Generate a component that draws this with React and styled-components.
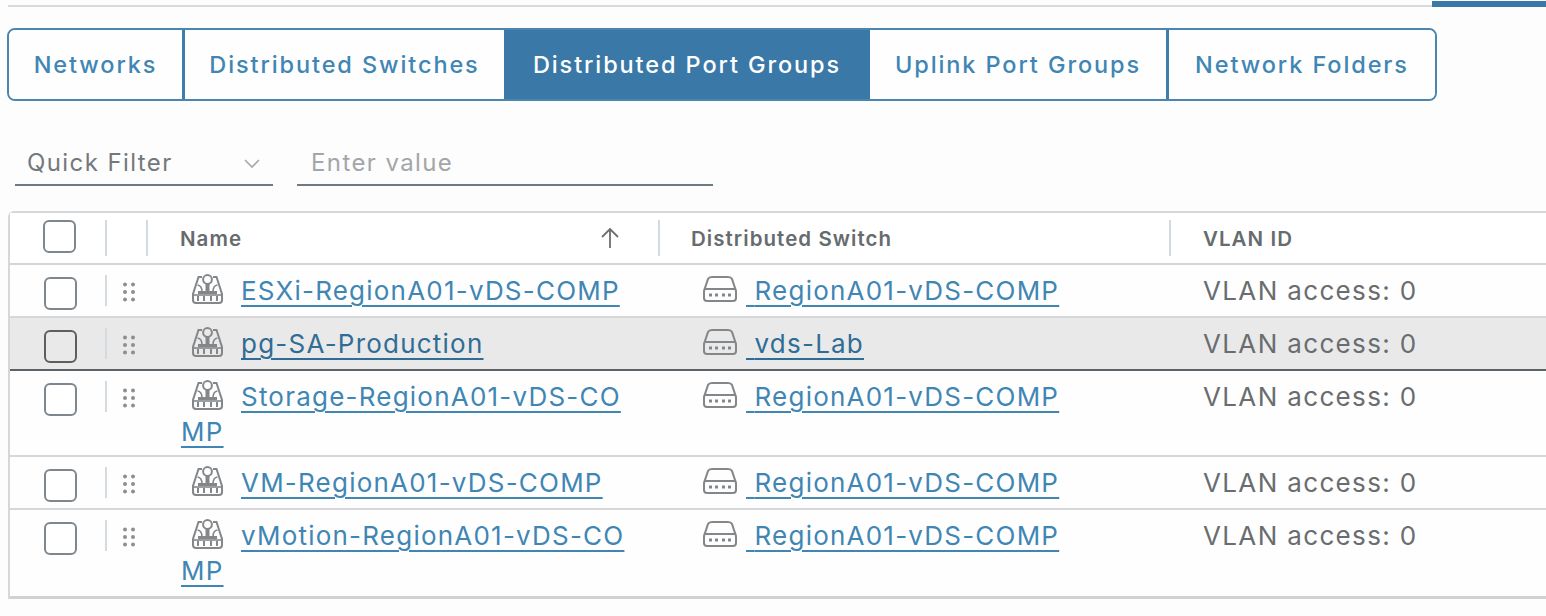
import React from "react";
import styled, { createGlobalStyle } from "styled-components";

const Global = createGlobalStyle`
  html, body { margin: 0; padding: 0; background: #fdfdfd; overflow: hidden; }
  body { width: 1546px; height: 616px; font-family: Inter, "Liberation Sans", sans-serif; }
`;
const Page = styled.div`
  width: 1546px; height: 616px; overflow: hidden; display: flex; flex-direction: column;
`;
const TopRule = styled.div`
  display: flex; align-items: flex-end; height: 7px; padding-left: 8px;
`;
const RuleLine = styled.div`
  width: 1424px; height: 2px; background: #d5dadd;
`;
const RuleActive = styled.div`
  width: 114px; height: 6px; background: #3a78a8;
`;
const Tabs = styled.div`
  display: flex; align-self: flex-start; height: 73px; margin: 21px 0 0 7px; box-sizing: border-box;
  border: 2px solid #4a86b0; border-radius: 8px; overflow: hidden;
`;
const Tab = styled.div`
  box-sizing: border-box; height: 100%; display: flex; align-items: center; justify-content: center;
  padding-bottom: 1px;
  width: ${p => p.$w}px; font-size: 23.5px; font-weight: 500; letter-spacing: 1.9px;
  color: ${p => (p.$active ? "#fff" : "#3f86b4")};
  background: ${p => (p.$active ? "#3a78a8" : "#fefefe")};
  border-left: ${p => (p.$divider ? "3px solid #3f7dac" : "none")};
`;
const Filters = styled.div`
  display: flex; gap: 24px; margin: 38px 0 0 15px; height: 47px;
`;
const Field = styled.div`
  box-sizing: border-box; width: ${p => p.$w}px; border-bottom: 2px solid #6f7b82;
  display: flex; align-items: flex-start; justify-content: space-between; padding: 9px ${p => (p.$chev ? "12px" : "0")} 0 ${p => p.$pad}px;
  font-size: 24px; line-height: 30px; letter-spacing: 1.4px; color: ${p => p.$color};
`;
const Chevron = styled.svg`
  width: 18px; height: 12px; margin-top: 10px; fill: none; stroke: #a5a9ac; stroke-width: 1.6;
`;
const Table = styled.div`
  margin: 25px 0 0 8px; width: 1600px; box-sizing: border-box;
  border: 2px solid #d5d8da; border-right: none; border-bottom: none; border-top-left-radius: 6px;
`;
const Cols = `display: grid; grid-template-columns: 97px 41px 512px 511px 1fr;`;
const Head = styled.div`
  ${Cols} height: 50px; box-sizing: content-box; border-bottom: 2px solid #d3d6d8; background: #fff; align-items: stretch;
`;
const Row = styled.div`
  ${Cols} box-sizing: border-box; height: ${p => p.$h}px; background: ${p => (p.$hover ? "#e9e9e9" : "#fefefe")};
  border-bottom: ${p => p.$end ? "3px solid #cfd1d2" : p.$hover ? "2px solid #5d6266" : "2px solid #d5d7d9"};
`;
const BoxCell = styled.div`
  position: relative; display: flex; align-items: ${p => (p.$head ? "center" : "flex-start")};
  padding: ${p => (p.$head ? "0 0 4px 33px" : "12px 0 0 34px")};
  box-sizing: border-box;
`;
const Sep = styled.span`
  position: absolute; right: 0; top: ${p => (p.$head ? "7px" : "10px")}; width: 2px; height: ${p => (p.$head ? "36px" : "31px")}; background: #d3dbe0;
`;
const Box = styled.span`
  box-sizing: border-box; width: 33px; height: 33px; border-radius: 6px; background: #fff; display: block;
  border: 2px solid ${p => (p.$dark ? "#5b5f62" : "#7d878d")};
  ${p => p.$hover && "background: transparent;"}
`;
const GripCell = styled.div`
  padding: 17px 0 0 15px;
`;
const Grip = styled.svg`
  width: 14px; height: 20px; fill: #8b8f92; display: block;
`;
const HeadCell = styled.div`
  position: relative; display: flex; align-items: center; justify-content: space-between;
  padding-left: ${p => p.$pad}px; font-size: 20.5px; font-weight: 600; color: #666b6e; letter-spacing: 1.05px;
`;
const SortArrow = styled.svg`
  width: 24px; height: 24px; margin-right: 38px; fill: none; stroke: #6b6f72; stroke-width: 1.8;
`;
const NameCell = styled.div`
  padding: 8px 0 0 33px; width: 484px; box-sizing: border-box; font-size: 26px; line-height: 35px;
  word-break: break-all;
`;
const IconWrap = styled.span`
  display: inline-block; width: ${p => p.$w}px; height: 32px; vertical-align: top; padding-left: ${p => p.$left}px; box-sizing: border-box;
`;
const DsCell = styled.div`
  padding: 8px 0 0 42px; font-size: 26px; line-height: 35px; white-space: nowrap; display: flex; align-items: flex-start;
`;
const Link = styled.a`
  color: ${p => (p.$hover ? "#2f6d96" : "#3f86b4")}; text-decoration: underline; text-underline-offset: 5px; text-decoration-thickness: 2px;
  letter-spacing: 1.22px;
`;
const Vlan = styled.div`
  padding: 8px 0 0 32px; font-size: 26px; line-height: 35px; letter-spacing: 1.35px; color: #6a6d70; white-space: nowrap;
`;
const IconSvg = styled.svg`
  width: 36px; height: 32px; fill: none; stroke: #84878a; stroke-width: 2; display: block;
`;

const PgIcon = () => (
  <IconSvg viewBox="0 0 36 32">
    <circle cx="17.5" cy="6.5" r="4.4" />
    <path d="M12 4 H8.5 L3 21 V27 Q3 30 6 30 H29 Q32 30 32 27 V21 L26.5 4 H23" />
    <path d="M7.5 12 Q12 12.5 12 19 M27.5 12 Q23 12.5 23 19" strokeWidth="1.6" />
    <path d="M17.5 11 V20" strokeWidth="4" />
    <path d="M8 19.5 H27" strokeWidth="3" />
    <path d="M3 22 H32" strokeWidth="1.6" />
    <path d="M8 23 V28 M14 23 V28 M21 23 V28 M27 23 V28" strokeWidth="2" />
  </IconSvg>
);
const SwIcon = () => (
  <IconSvg viewBox="0 0 36 32">
    <path d="M6 6 Q7 4 10 4 H26 Q29 4 30 6 L33 15 Q34 17 34 19 V25 Q34 28 31 28 H5 Q2 28 2 25 V19 Q2 17 3 15 Z" />
    <path d="M3 16 H33" />
    <path d="M7 22 H10 M13 22 H16 M20 22 H23 M26 22 H29" strokeWidth="2.8" />
  </IconSvg>
);
const GripIcon = () => (
  <Grip viewBox="0 0 14 20">
    {[2.5, 10, 17.5].map(y => [3, 11].map(x => <circle key={`${x}-${y}`} cx={x} cy={y} r="2" />))}
  </Grip>
);

const rows = [
  { name: "ESXi-RegionA01-vDS-COMP", ds: "RegionA01-vDS-COMP", h: 53 },
  { name: "pg-SA-Production", ds: "vds-Lab", h: 53, hover: true },
  { name: "Storage-RegionA01-vDS-COMP", ds: "RegionA01-vDS-COMP", h: 86 },
  { name: "VM-RegionA01-vDS-COMP", ds: "RegionA01-vDS-COMP", h: 53 },
  { name: "vMotion-RegionA01-vDS-COMP", ds: "RegionA01-vDS-COMP", h: 89, end: true },
];

export default function App() {
  return (
    <Page>
      <Global />
      <TopRule>
        <RuleLine />
        <RuleActive />
      </TopRule>
      <Tabs>
        <Tab $w={173}>Networks</Tab>
        <Tab $w={322} $divider>Distributed Switches</Tab>
        <Tab $w={366} $active>Distributed Port Groups</Tab>
        <Tab $w={296}>Uplink Port Groups</Tab>
        <Tab $w={269} $divider>Network Folders</Tab>
      </Tabs>
      <Filters>
        <Field $w={258} $pad={12} $chev $color="#74787b">
          Quick Filter
          <Chevron viewBox="0 0 18 12"><path d="M2 2 L9 9 L16 2" /></Chevron>
        </Field>
        <Field $w={416} $pad={14} $color="#a3a6a9">Enter value</Field>
      </Filters>
      <Table>
        <Head>
          <BoxCell $head><Box /><Sep $head /></BoxCell>
          <BoxCell $head><Sep $head /></BoxCell>
          <HeadCell $pad={32}>
            Name
            <SortArrow viewBox="0 0 24 24"><path d="M12 22 V3 M4 11 L12 3 L20 11" /></SortArrow>
            <Sep $head />
          </HeadCell>
          <HeadCell $pad={31}>Distributed Switch<Sep $head /></HeadCell>
          <HeadCell $pad={32}>VLAN ID</HeadCell>
        </Head>
        {rows.map(r => (
          <Row key={r.name} $h={r.h} $hover={r.hover} $end={r.end}>
            <BoxCell><Box $dark={r.hover} $hover={r.hover} /><Sep /></BoxCell>
            <GripCell><GripIcon /></GripCell>
            <NameCell>
              <IconWrap $w={60} $left={9}><PgIcon /></IconWrap>
              <Link href="#" $hover={r.hover}>{r.name}</Link>
            </NameCell>
            <DsCell>
              <IconWrap $w={44} $left={0}><SwIcon /></IconWrap>
              <Link href="#" $hover={r.hover}>&nbsp;{r.ds}</Link>
            </DsCell>
            <Vlan>VLAN access: 0</Vlan>
          </Row>
        ))}
      </Table>
    </Page>
  );
}
